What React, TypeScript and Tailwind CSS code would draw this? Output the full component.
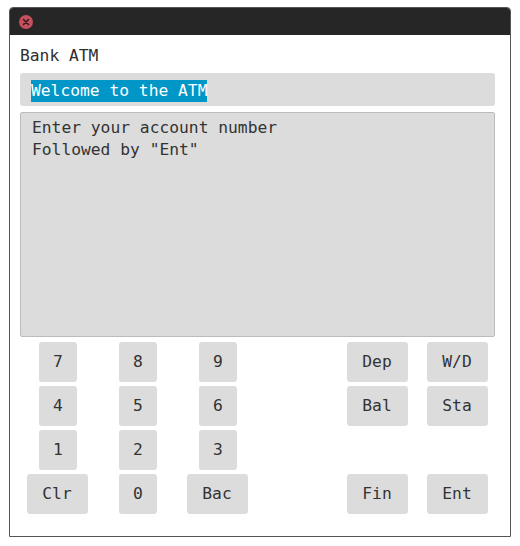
import React from "react";

const mono = { fontFamily: '"DejaVu Sans Mono", "Liberation Mono", monospace' };

type Key = { label: string; col: number; wide?: boolean };

const rows: Key[][] = [
    [{ label: "7", col: 1 }, { label: "8", col: 2 }, { label: "9", col: 3 }, { label: "Dep", col: 5, wide: true }, { label: "W/D", col: 6, wide: true }],
    [{ label: "4", col: 1 }, { label: "5", col: 2 }, { label: "6", col: 3 }, { label: "Bal", col: 5, wide: true }, { label: "Sta", col: 6, wide: true }],
    [{ label: "1", col: 1 }, { label: "2", col: 2 }, { label: "3", col: 3 }],
    [{ label: "Clr", col: 1, wide: true }, { label: "0", col: 2 }, { label: "Bac", col: 3, wide: true }, { label: "Fin", col: 5, wide: true }, { label: "Ent", col: 6, wide: true }],
];

const colClass: Record<number, string> = {
    1: "col-start-1",
    2: "col-start-2",
    3: "col-start-3",
    5: "col-start-5",
    6: "col-start-6",
};

const App: React.FC = () => {
    return (
        <div className="w-[520px] h-[546px] bg-white pt-[7px] pl-[9px]" style={mono}>
            <div className="w-[502px] h-[530px] border border-[#555] rounded-t-[4px] flex flex-col bg-white">
                {/* title bar */}
                <div className="h-[27px] bg-[#262626] rounded-t-[3px] flex items-center pl-[9px] shrink-0">
                    <div className="w-[14px] h-[14px] rounded-full bg-[#c4505c] flex items-center justify-center">
                        <svg width="8" height="8" viewBox="0 0 8 8">
                            <path d="M1.5 1.5 L6.5 6.5 M6.5 1.5 L1.5 6.5" stroke="#3a1a1e" strokeWidth="1.6" strokeLinecap="round" />
                        </svg>
                    </div>
                </div>

                <div className="pl-[10px] flex flex-col">
                    <div className="mt-[10px] h-[22px] leading-[22px] text-[16.3px] text-[#2e2e2e]">Bank ATM</div>

                    <div className="mt-[6px] w-[475px] h-[33px] bg-[#dcdcdc] rounded-[3px] pl-[11px] pt-[6px]">
                        <span className="inline-block h-[22px] leading-[22px] bg-[#0096c8] text-white text-[16.3px]">Welcome to the ATM</span>
                    </div>

                    <div className="mt-[6px] w-[475px] h-[225px] bg-[#dcdcdc] border border-[#bcbcbc] rounded-[2px] pl-[11px] pt-[4px] text-[16.3px] leading-[22px] text-[#333]">
                        <div>Enter your account number</div>
                        <div>Followed by "Ent"</div>
                    </div>
                </div>

                {/* keypad */}
                <div className="ml-[7px] mt-[5px] w-[480px] grid grid-cols-6 gap-y-[4px]">
                    {rows.map((row, ri) =>
                        row.map((k) => (
                            <div
                                key={`${ri}-${k.label}`}
                                className={`${colClass[k.col]} flex justify-center`}
                                style={{ gridRow: ri + 1 }}
                            >
                                <button
                                    className={`${k.wide ? "w-[61px]" : "w-[38px] ml-[2px]"} h-[40px] bg-[#dcdcdc] rounded-[3px] text-[16.3px] text-[#333] flex items-center justify-center`}
                                    style={mono}
                                >
                                    {k.label}
                                </button>
                            </div>
                        ))
                    )}
                </div>
            </div>
        </div>
    );
};

export default App;
